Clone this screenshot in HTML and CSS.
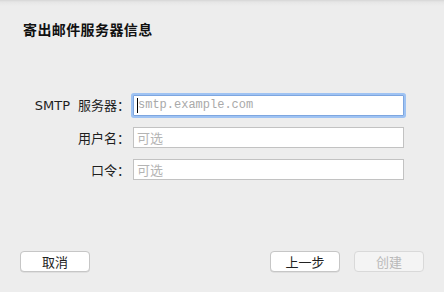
FILE: index.html
```html
<!DOCTYPE html>
<html lang="zh-CN">
<head>
<meta charset="utf-8">
<link rel="stylesheet" href="styles.css">
</head>
<body>
<div class="sheet">
  <h1 class="title">寄出邮件服务器信息</h1>
  <div class="form">
    <label class="label"><span class="latin">SMTP</span>服务器：</label>
    <div class="field focused"><span class="caret"></span><span class="ph mono">smtp.example.com</span></div>
    <label class="label">用户名：</label>
    <div class="field"><span class="ph">可选</span></div>
    <label class="label">口令：</label>
    <div class="field"><span class="ph">可选</span></div>
  </div>
  <div class="footer">
    <button class="btn">取消</button>
    <div class="right">
      <button class="btn">上一步</button>
      <button class="btn disabled">创建</button>
    </div>
  </div>
</div>
</body>
</html>
```

FILE: styles.css
```css
html, body {
  margin: 0;
  padding: 0;
  width: 444px;
  height: 292px;
  overflow: hidden;
}
body {
  background: #ededed;
  font-family: "Liberation Sans", "Noto Sans CJK SC", sans-serif;
  color: #1a1a1a;
}
.sheet {
  position: relative;
  height: 292px;
  box-sizing: border-box;
  display: flex;
  flex-direction: column;
  background: linear-gradient(#d6d6d6 0px, #e6e6e6 2px, #ededed 6px, #ededed 100%);
}
.title {
  margin: 19px 0 0 23px;
  font-size: 14px;
  line-height: 20px;
  font-weight: bold;
  letter-spacing: 0.4px;
  font-family: "Noto Sans CJK SC", sans-serif;
  color: #111;
}
.form {
  margin-top: 55px;
  display: grid;
  grid-template-columns: 130px 271px;
  column-gap: 3px;
  row-gap: 11px;
  align-items: center;
}
.label {
  justify-self: end;
  font-size: 13px;
  line-height: 21px;
  font-family: "Noto Sans CJK SC", sans-serif;
  color: #1e1e1e;
}
.latin {
  font-family: "DejaVu Sans", sans-serif;
  font-size: 13px;
  margin-right: 8px;
}
.field {
  height: 21px;
  box-sizing: border-box;
  border: 1px solid #c2c2c2;
  background: #fff;
  display: flex;
  align-items: center;
  padding-left: 3px;
}
.field.focused {
  border-color: #7ea6df;
  box-shadow: 0 0 0 2px #9fc3f3;
  border-radius: 1px;
}
.caret {
  width: 1px;
  height: 15px;
  background: #000;
}
.ph {
  font-size: 13px;
  line-height: 19px;
  color: #b4b4b4;
  font-family: "Noto Sans CJK SC", sans-serif;
}
.ph.mono {
  font-family: "Liberation Mono", monospace;
  font-size: 12px;
  color: #a9a9a9;
}
.footer {
  margin-top: auto;
  padding: 0 20px 20px 20px;
  display: flex;
  justify-content: space-between;
}
.right {
  display: flex;
  gap: 14px;
}
.btn {
  width: 70px;
  height: 21px;
  box-sizing: border-box;
  border: 1px solid #c6c6c6;
  border-radius: 4px;
  background: #fff;
  font-family: "Noto Sans CJK SC", sans-serif;
  font-size: 13px;
  line-height: 19px;
  padding: 0;
  color: #222;
  box-shadow: 0 0.5px 0.5px rgba(0,0,0,0.12);
}
.btn.disabled {
  background: #f4f4f4;
  border-color: #d9d9d9;
  color: #b9b9b9;
  box-shadow: none;
}
```
